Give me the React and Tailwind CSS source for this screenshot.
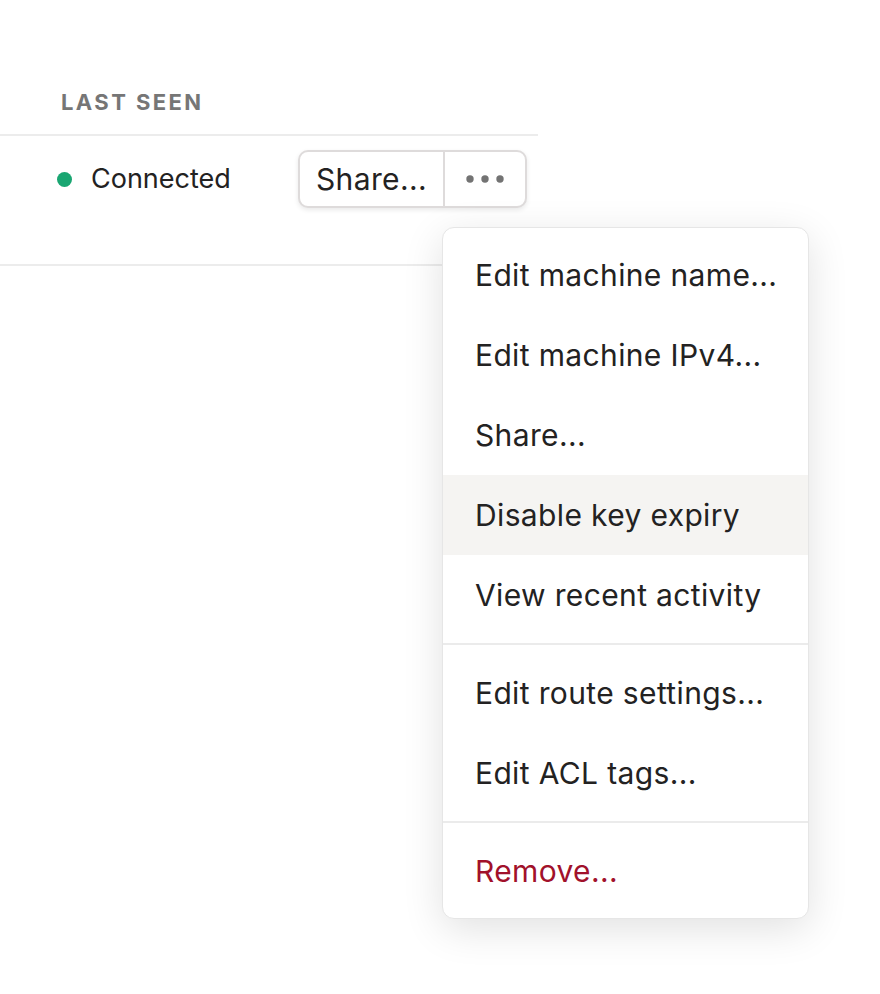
import React from "react";

const items1 = [
  "Edit machine name...",
  "Edit machine IPv4...",
  "Share...",
  "Disable key expiry",
  "View recent activity",
];
const items2 = ["Edit route settings...", "Edit ACL tags..."];

function Item({ children, active, danger }) {
  return (
    <div
      className={
        "px-[32px] py-[20px] text-[30px] tracking-[0.012em] leading-[40px] whitespace-nowrap " +
        (active ? "bg-[#f5f4f2] " : "") +
        (danger ? "text-[#a1112b]" : "text-[#232222]")
      }
    >
      {children}
    </div>
  );
}

export default function App() {
  return (
    <div
      className="relative w-[880px] h-[994px] bg-white overflow-hidden"
      style={{ fontFamily: "Inter, 'Noto Sans', sans-serif" }}
    >
      <div className="w-[538px]">
        <div className="pt-[88px] pb-[18px] pl-[61px] border-b-2 border-[#ececec]">
          <div className="text-[22px] leading-[28px] font-bold tracking-[0.11em] text-[#767676] uppercase">
            Last seen
          </div>
        </div>
        <div className="flex items-start pt-[14px] pb-[56px] border-b-2 border-[#ececec]">
          <div className="w-[298px] h-[58px] flex items-center pl-[57px]">
            <span className="w-[15px] h-[15px] rounded-full bg-[#1aa672] shrink-0" />
            <span className="ml-[19px] text-[27px] leading-[32px] text-[#232222]">
              Connected
            </span>
          </div>
          <div className="flex h-[58px] rounded-[10px] border-2 border-[#dedbdb] shadow-[0_2px_5px_rgba(0,0,0,0.09)] bg-white">
            <div className="flex items-center px-[16px] text-[30px] tracking-[0.012em] leading-[40px] text-[#232222]">
              Share...
            </div>
            <div className="w-[2px] bg-[#dedbdb]" />
            <div className="flex items-center justify-center w-[80px]">
              <svg width="38" height="8" viewBox="0 0 38 8">
                <circle cx="4" cy="4" r="3.7" fill="#737373" />
                <circle cx="19" cy="4" r="3.7" fill="#737373" />
                <circle cx="34" cy="4" r="3.7" fill="#737373" />
              </svg>
            </div>
          </div>
        </div>
      </div>

      <div className="absolute left-[442px] top-[227px] w-[367px] bg-white rounded-[12px] border border-[#e6e6e6] shadow-[0_10px_40px_rgba(0,0,0,0.12)] py-[7px]">
        {items1.map((t) => (
          <Item key={t} active={t === "Disable key expiry"}>
            {t}
          </Item>
        ))}
        <div className="my-[8px] h-[2px] bg-[#ebebeb]" />
        {items2.map((t) => (
          <Item key={t}>{t}</Item>
        ))}
        <div className="my-[8px] h-[2px] bg-[#ebebeb]" />
        <Item danger>Remove...</Item>
      </div>
    </div>
  );
}
